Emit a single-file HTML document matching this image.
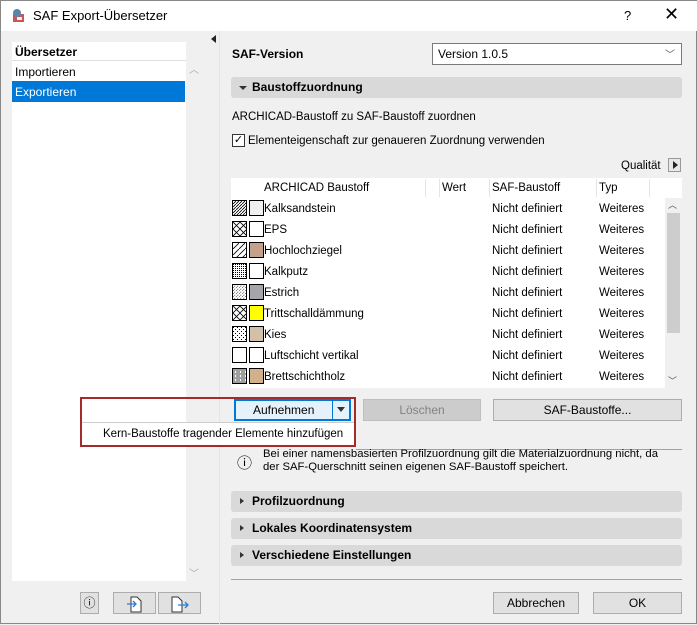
<!DOCTYPE html>
<html><head><meta charset="utf-8"><style>
*{box-sizing:border-box;margin:0;padding:0}
body{width:697px;height:624px;background:#f0f0f0;font-family:"Liberation Sans",sans-serif;font-size:12px;color:#000;position:relative;overflow:hidden;border:1px solid #888}
.a{position:absolute;white-space:nowrap}
.btn{position:absolute;background:#e1e1e1;border:1px solid #adadad;text-align:center;line-height:20px;height:22px}
.sec{position:absolute;left:230px;width:451px;height:21px;background:#d9d9d9;border-radius:3px;font-weight:bold;line-height:21px;padding-left:21px}
.sec .ar{position:absolute;left:9px;top:7px;border-left:4px solid #333;border-top:3.5px solid transparent;border-bottom:3.5px solid transparent}
.sec .dn{position:absolute;left:8px;top:9px;border-top:4px solid #333;border-left:4px solid transparent;border-right:4px solid transparent}
.row{position:absolute;left:231px;width:433px;height:21px;line-height:22px}
.row .n{position:absolute;left:32px}.row .s{position:absolute;left:260px}.row .t{position:absolute;left:367px}
.sw{position:absolute;top:2px;width:15px;height:16px;border:1px solid #000}
</style></head><body>
<div class="a" style="left:0;top:0;width:697px;height:30px;background:#fff"></div>
<svg class="a" style="left:10px;top:7px" width="16" height="16"><rect x="2" y="6" width="11" height="8" fill="#c55" /><circle cx="6" cy="5" r="4" fill="#58a"/><rect x="6" y="9" width="5" height="3" fill="#eee"/></svg>
<div class="a" style="left:32px;top:7px;font-size:13px">SAF Export-Übersetzer</div>
<div class="a" style="left:623px;top:7px;font-size:13px">?</div>
<div class="a" style="left:663px;top:3px;font-size:18px">✕</div>

<div class="a" style="left:11px;top:41px;width:174px;height:539px;background:#fff"></div>
<div class="a" style="left:14px;top:44px;font-weight:bold">Übersetzer</div>
<div class="a" style="left:11px;top:59px;width:174px;height:1px;background:#e0e0e0"></div>
<div class="a" style="left:14px;top:64px">Importieren</div>
<div class="a" style="left:11px;top:80px;width:173px;height:21px;background:#0078d7;color:#fff;padding:4px 3px">Exportieren</div>
<div class="a" style="left:188px;top:60px;color:#aaa;font-size:10px">︿</div>
<div class="a" style="left:188px;top:564px;color:#aaa;font-size:10px">﹀</div>
<div class="a" style="left:210px;top:34px;border-right:5px solid #222;border-top:4px solid transparent;border-bottom:4px solid transparent"></div>
<div class="a" style="left:218px;top:30px;width:1px;height:594px;background:#e4e4e4"></div>

<div class="btn" style="left:79px;top:591px;width:19px;background:#e1e1e1">ⓘ</div>
<div class="btn" style="left:112px;top:591px;width:43px"><svg width="20" height="18" style="margin-top:2px"><path d="M6 2h6l4 4v11H6z" fill="#fff" stroke="#333"/><path d="M2 9h9M8 6l3 3-3 3" stroke="#2a7bd8" fill="none" stroke-width="1.3"/></svg></div>
<div class="btn" style="left:157px;top:591px;width:43px"><svg width="22" height="18" style="margin-top:2px"><path d="M3 2h6l4 4v11H3z" fill="#fff" stroke="#333"/><path d="M9 10h10M16 7l3 3-3 3" stroke="#2a7bd8" fill="none" stroke-width="1.3"/></svg></div>

<div class="a" style="left:231px;top:46px;font-weight:bold">SAF-Version</div>
<div class="a" style="left:431px;top:42px;width:250px;height:22px;background:#fff;border:1px solid #7a7a7a;padding:3px 5px">Version 1.0.5<span style="position:absolute;right:6px;top:2px;font-size:10px;color:#555">﹀</span></div>
<div class="sec" style="top:76px"><span class="dn"></span>Baustoffzuordnung</div>
<div class="a" style="left:231px;top:110px;font-size:11.5px">ARCHICAD-Baustoff zu SAF-Baustoff zuordnen</div>
<div class="a" style="left:231px;top:133px;width:13px;height:13px;border:1px solid #333;background:#fff;font-size:11px;line-height:11px;text-align:center">✓</div>
<div class="a" style="left:247px;top:134px;font-size:11.5px">Elementeigenschaft zur genaueren Zuordnung verwenden</div>
<div class="a" style="left:620px;top:159px;font-size:11.5px">Qualität</div>
<div class="a" style="left:667px;top:157px;width:13px;height:14px;border:1px solid #999;background:#e8e8e8"><div style="margin:2px 0 0 4px;border-left:5px solid #222;border-top:4px solid transparent;border-bottom:4px solid transparent;width:0"></div></div>

<div class="a" style="left:230px;top:177px;width:451px;height:210px;background:#fff"></div>
<div style="position:absolute;left:0;top:1px;width:697px;font-size:11.5px">
<div class="a" style="left:263px;top:180px">ARCHICAD Baustoff</div>
<div class="a" style="left:441px;top:180px">Wert</div>
<div class="a" style="left:491px;top:180px">SAF-Baustoff</div>
<div class="a" style="left:598px;top:180px">Typ</div>
</div>
<div class="a" style="left:424px;top:178px;width:1px;height:18px;background:#e5e5e5"></div>
<div class="a" style="left:438px;top:178px;width:1px;height:18px;background:#e5e5e5"></div>
<div class="a" style="left:488px;top:178px;width:1px;height:18px;background:#e5e5e5"></div>
<div class="a" style="left:595px;top:178px;width:1px;height:18px;background:#e5e5e5"></div>
<div class="a" style="left:648px;top:178px;width:1px;height:18px;background:#e5e5e5"></div>
<div class="a" style="left:664px;top:197px;width:17px;height:190px;background:#f0f0f0"></div>
<div class="a" style="left:666px;top:212px;width:13px;height:120px;background:#cdcdcd"></div>
<div class="a" style="left:667px;top:197px;font-size:9px;color:#555">︿</div>
<div class="a" style="left:667px;top:373px;font-size:9px;color:#555">﹀</div>

<svg width="0" height="0" style="position:absolute"><defs>
<pattern id="p1" width="3" height="3" patternUnits="userSpaceOnUse"><path d="M0 3L3 0" stroke="#000" stroke-width=".8"/></pattern>
<pattern id="p2" width="7" height="7" patternUnits="userSpaceOnUse"><path d="M0 0L7 7M7 0L0 7" stroke="#000" stroke-width=".8"/></pattern>
<pattern id="p3" width="6" height="6" patternUnits="userSpaceOnUse"><path d="M0 6L6 0" stroke="#000" stroke-width=".8"/></pattern>
<pattern id="p4" width="2" height="2" patternUnits="userSpaceOnUse"><rect width="1" height="1" fill="#000"/></pattern>
<pattern id="p5" width="3" height="3" patternUnits="userSpaceOnUse"><path d="M0 3L3 0" stroke="#000" stroke-width=".6" stroke-dasharray="1 1"/></pattern>
<pattern id="p6" width="4" height="4" patternUnits="userSpaceOnUse"><rect width="1" height="1" fill="#000"/><rect x="2" y="2" width="1" height="1" fill="#000"/></pattern>
<pattern id="p7" width="5" height="4" patternUnits="userSpaceOnUse"><path d="M0 1h5M0 3h2M3 3h2" stroke="#000" stroke-width=".8"/></pattern>
</defs></svg>

<div style="font-size:11.5px">
<div class="row" style="top:197px"><svg class="sw" style="left:0"><rect width="15" height="16" fill="url(#p1)"/></svg><div class="sw" style="left:17px;background:#f0f0f0"></div><span class="n">Kalksandstein</span><span class="s">Nicht definiert</span><span class="t">Weiteres</span></div>
<div class="row" style="top:218px"><svg class="sw" style="left:0"><rect width="15" height="16" fill="url(#p2)"/></svg><div class="sw" style="left:17px;background:#fff"></div><span class="n">EPS</span><span class="s">Nicht definiert</span><span class="t">Weiteres</span></div>
<div class="row" style="top:239px"><svg class="sw" style="left:0"><rect width="15" height="16" fill="url(#p3)"/></svg><div class="sw" style="left:17px;background:#c5a08b"></div><span class="n">Hochlochziegel</span><span class="s">Nicht definiert</span><span class="t">Weiteres</span></div>
<div class="row" style="top:260px"><svg class="sw" style="left:0"><rect width="15" height="16" fill="url(#p4)"/></svg><div class="sw" style="left:17px;background:#fff"></div><span class="n">Kalkputz</span><span class="s">Nicht definiert</span><span class="t">Weiteres</span></div>
<div class="row" style="top:281px"><svg class="sw" style="left:0"><rect width="15" height="16" fill="url(#p5)"/></svg><div class="sw" style="left:17px;background:#a4a6a9"></div><span class="n">Estrich</span><span class="s">Nicht definiert</span><span class="t">Weiteres</span></div>
<div class="row" style="top:302px"><svg class="sw" style="left:0"><rect width="15" height="16" fill="url(#p2)"/></svg><div class="sw" style="left:17px;background:#ffff00"></div><span class="n">Trittschalldämmung</span><span class="s">Nicht definiert</span><span class="t">Weiteres</span></div>
<div class="row" style="top:323px"><svg class="sw" style="left:0"><rect width="15" height="16" fill="url(#p6)"/></svg><div class="sw" style="left:17px;background:#d2c0a8"></div><span class="n">Kies</span><span class="s">Nicht definiert</span><span class="t">Weiteres</span></div>
<div class="row" style="top:344px"><div class="sw" style="left:0;background:#fff"></div><div class="sw" style="left:17px;background:#fff"></div><span class="n">Luftschicht vertikal</span><span class="s">Nicht definiert</span><span class="t">Weiteres</span></div>
<div class="row" style="top:365px"><svg class="sw" style="left:0"><rect width="15" height="16" fill="url(#p7)"/></svg><div class="sw" style="left:17px;background:#d0b18c"></div><span class="n">Brettschichtholz</span><span class="s">Nicht definiert</span><span class="t">Weiteres</span></div>
</div>

<div class="btn" style="left:233px;top:398px;width:117px;border:2px solid #0078d7;background:#e5f1fb;line-height:18px"><span style="position:absolute;left:17px">Aufnehmen</span><span style="position:absolute;left:96px;top:0;width:1px;height:18px;background:#0078d7"></span><span style="position:absolute;left:101px;top:6px;border-top:5px solid #333;border-left:4px solid transparent;border-right:4px solid transparent"></span></div>
<div class="btn" style="left:362px;top:398px;width:118px;background:#cccccc;border-color:#bfbfbf;color:#838383">Löschen</div>
<div class="btn" style="left:492px;top:398px;width:189px">SAF-Baustoffe...</div>
<div class="a" style="left:79px;top:396px;width:276px;height:50px;border:2px solid #a52a2a"></div>
<div class="a" style="left:81px;top:421px;width:272px;height:1px;background:#ccc"></div>
<div class="a" style="left:81px;top:422px;width:272px;height:22px;background:#fff;padding:5px 0 0 21px;font-size:11.5px">Kern-Baustoffe tragender Elemente hinzufügen</div>
<div class="a" style="left:355px;top:448px;width:326px;height:1px;background:#a0a0a0"></div>
<div class="a" style="left:236px;top:451px;font-size:15px">ⓘ</div>
<div class="a" style="left:262px;top:447px;line-height:13px;font-size:11.3px">Bei einer namensbasierten Profilzuordnung gilt die Materialzuordnung nicht, da<br>der SAF-Querschnitt seinen eigenen SAF-Baustoff speichert.</div>

<div class="sec" style="top:490px"><span class="ar"></span>Profilzuordnung</div>
<div class="sec" style="top:517px"><span class="ar"></span>Lokales Koordinatensystem</div>
<div class="sec" style="top:544px"><span class="ar"></span>Verschiedene Einstellungen</div>
<div class="a" style="left:230px;top:578px;width:451px;height:1px;background:#a0a0a0"></div>
<div class="btn" style="left:492px;top:591px;width:86px">Abbrechen</div>
<div class="btn" style="left:592px;top:591px;width:89px">OK</div>
</body></html>
